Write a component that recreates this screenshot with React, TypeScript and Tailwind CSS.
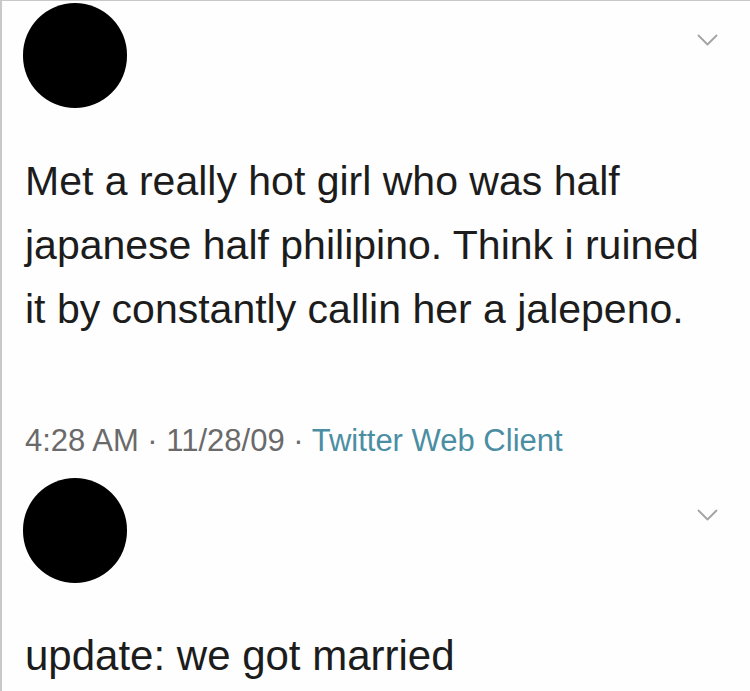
export default function App() {
  return (
    <section className="w-[750px] h-[691px] overflow-hidden bg-[#fefefe] border-l-2 border-t border-[#c8c8c8] font-['Liberation_Sans',Arial,sans-serif] text-[#1c1c1c]">
      <TweetHeader top="mt-[2px]" />

      <p className="mt-[41px] pl-[23px] text-[41px] leading-[64px] whitespace-nowrap">
        Met a really hot girl who was half
        <br />
        japanese half philipino. Think i ruined
        <br />
        it by constantly callin her a jalepeno.
      </p>

      <p className="mt-[80px] pl-[23px] text-[31px] leading-[40px] text-[#6a6a6a] whitespace-nowrap">
        4:28 AM · 11/28/09 · <span className="text-[#4b8ea4]">Twitter Web Client</span>
      </p>

      <TweetHeader top="mt-[17px]" />

      <p className="mt-[48px] pl-[23px] text-[42px] leading-[50px] whitespace-nowrap">
        update: we got married
      </p>
    </section>
  );
}

function TweetHeader({ top }: { top: string }) {
  return (
    <div className={`${top} flex justify-between items-start pl-[21px] pr-[32px]`}>
      <div className="w-[104px] h-[105px] rounded-full bg-black" />
      <svg
        className="mt-[31px]"
        width="21"
        height="12"
        viewBox="0 0 21 12"
        fill="none"
        stroke="#a3a3a3"
        strokeWidth="1.8"
        strokeLinecap="round"
        strokeLinejoin="round"
      >
        <path d="M1.5 1.5 L10.5 10.5 L19.5 1.5" />
      </svg>
    </div>
  );
}
